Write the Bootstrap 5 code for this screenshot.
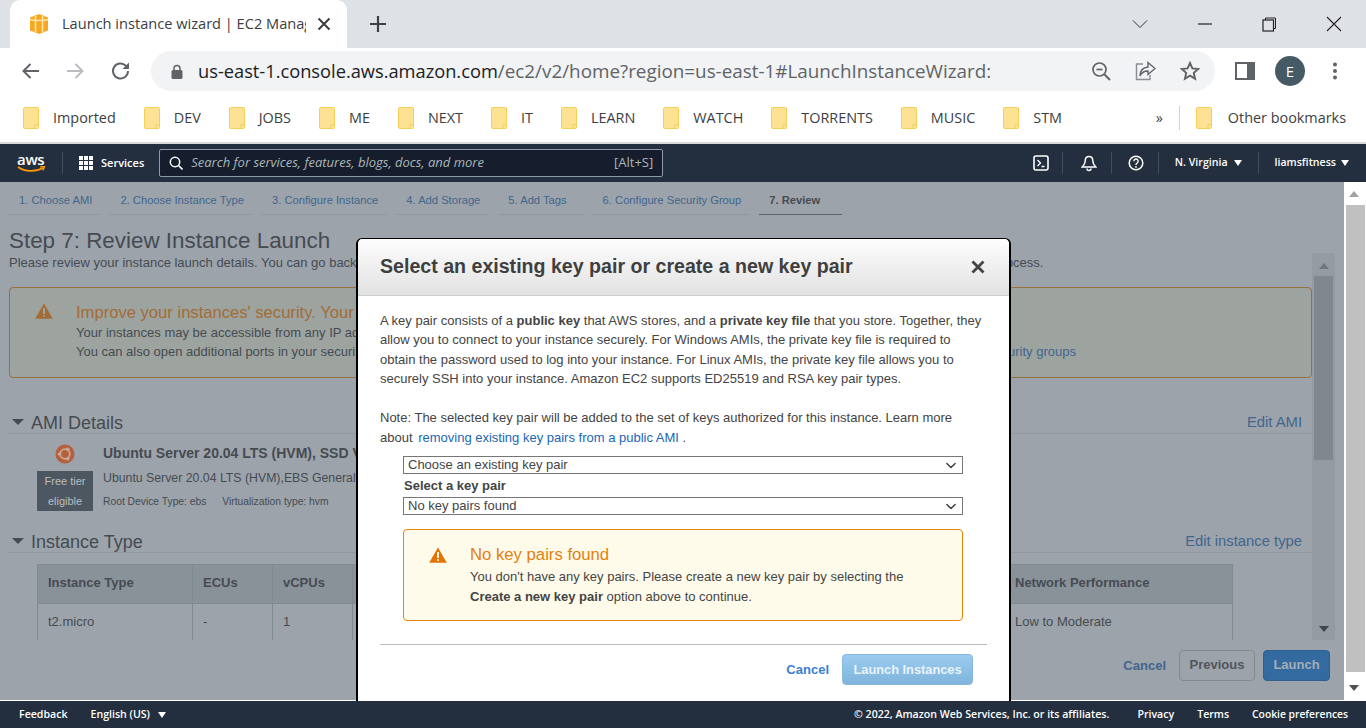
<!DOCTYPE html>
<html lang="en">
<head>
<meta charset="UTF-8">
<meta name="viewport" content="width=device-width, initial-scale=1.0">
<title>Launch instance wizard | EC2 Management Console</title>
<link rel="stylesheet" href="https://cdn.jsdelivr.net/npm/bootstrap@5.3.0/dist/css/bootstrap.min.css">
<style>
html, body { height: 728px; overflow: hidden; }
body { font-family: "Liberation Sans", Arial, sans-serif; background: #fff; color: #444; position: relative; }

/* browser chrome */
.tab-strip { height: 48px; background: #dee1e6; font-family: "Open Sans", sans-serif; }
.tab-active { width: 337px; margin-left: 10px; height: 48px; background: #fff; border-radius: 10px 10px 0 0; padding-left: 18px; flex-shrink: 0; }
.tab-title { width: 244px; margin-left: 12px; margin-right: 11px; font-size: 14.6px; color: #3c4043; white-space: nowrap; overflow: hidden; flex-shrink: 0; }
.win-btns { margin-left: auto; }
.win-btn { width: 64.5px; display: flex; justify-content: center; }
.tool-row { height: 46px; padding-left: 21px; }
.omni { width: 1064px; height: 40px; margin-left: 19px; margin-right: 15px; background: #f1f3f4; border-radius: 20px; padding-left: 20px; padding-right: 15px; font-family: "Open Sans", sans-serif; }
.omni-url { margin-left: 15px; font-size: 18.85px; color: #5f6368; white-space: nowrap; }
.omni-url b { font-weight: 400; font-size: 18.26px; color: #202124; }
.avatar-e { width: 30px; height: 30px; border-radius: 50%; background: #455a64; color: #fff; font-size: 15px; font-family: "Open Sans", sans-serif; }
.bm-row { height: 48px; padding-left: 23px; font-family: "Open Sans", sans-serif; font-size: 14.4px; color: #3c4043; white-space: nowrap; }
.bm-item { gap: 14px; margin-right: 28px; }
.bm-more { margin-left: auto; padding-right: 20px; }
.bm-sep { width: 1px; height: 24px; background: #d0d2d6; margin: 0 16px 0 16px; }

/* aws bars */
.aws-bar { background: #232f3e; color: #fff; font-family: "Open Sans", sans-serif; }
.aws-top { height: 38px; margin-top: 2px; padding-left: 17px; font-size: 11px; font-weight: 600; box-shadow: 0 -2px 0 #d9dadc; }
.top-sep { width: 1px; height: 22px; background: #414d5c; }
.search-box { width: 504px; height: 28px; background: #161e2d; border: 1px solid #8d99a8; border-radius: 2px; margin-left: 15px; padding: 0 9px 0 9px; color: #aab7b8; font-size: 13px; font-weight: 400; }
.search-box i { margin-left: 8px; }
.search-keys { margin-left: auto; font-size: 13px; }
.tri-w { display: inline-block; border-left: 4px solid transparent; border-right: 4px solid transparent; border-top: 6px solid #fff; }
.aws-foot { height: 27px; margin-top: 1px; padding-left: 19px; padding-right: 18px; font-size: 10.6px; font-weight: 600; white-space: nowrap; }

/* dimmed console page */
.page-wrap { height: 518px; background: #fff; }
.page-dim { width: 1344px; background: #9ca3aa; color: #464b52; }
.wiz-tabs { height: 33px; padding-left: 9px; gap: 10px; font-size: 11.2px; }
.wiz-tab { padding: 10px 8px 0 10px; color: #41668f; border-bottom: 1px solid #8f979f; white-space: nowrap; }
.wiz-tab-wide { padding-right: 16px; }
.wiz-tab-on { color: #464b52; font-weight: 700; border-bottom-color: #5c646c; padding-right: 22px; }
.step-h { height: 38px; padding: 14px 0 0 9px; font-size: 22.4px; line-height: 24px; color: #464b52; margin: 0; }
.scroll-pane { height: 387px; }
.pane-inner { width: 1303px; margin-left: 9px; overflow: hidden; font-size: 13px; white-space: nowrap; }
.step-sub { line-height: 20px; }
.step-sub-end { margin-left: 9px; }
.warn-dim { height: 91px; margin-top: 14px; border: 1px solid #96703f; border-radius: 4px; background: #9da39f; display: flex; padding: 15px 0 0 25px; gap: 23px; }
.warn-dim h5 { font-size: 16.6px; font-weight: 400; color: #a36c36; margin: 0 0 1px; line-height: 20px; }
.warn-dim p { margin: 0; line-height: 18.6px; }
.link-dim { color: #41668f; margin-left: 6px; }
.sec-head { border-bottom: 1px solid #8f979f; height: 21px; font-size: 18px; line-height: 20px; padding-left: 3px; }
.sec-head .edit-link { font-size: 14.8px; color: #41668f; margin: 0 10px 2px auto; }
.tri-d { display: inline-block; border-left: 6px solid transparent; border-right: 6px solid transparent; border-top: 6px solid #464b52; margin-right: 7px; position: relative; top: -1px; }
.ami-row { padding-left: 28px; height: 98px; }
.ami-side { width: 56px; margin-right: 10px; }
.ami-logo { margin-top: 10px; }
.free-tag { width: 56px; height: 40px; background: #4d5761; color: #b9bec3; font-size: 11px; line-height: 20px; text-align: center; margin-top: 7px; }
.ami-t { font-size: 14px; font-weight: 700; line-height: 16px; margin-top: 11px; }
.ami-d { font-size: 12.3px; line-height: 16px; margin-top: 9px; }
.ami-m { font-size: 10.3px; line-height: 14px; margin-top: 9px; }
.ami-m span { margin-right: 13px; }
.dim-table { width: 1195px; margin: 11px 0 0 28px; border-collapse: collapse; table-layout: fixed; }
.dim-table th { height: 39px; background: #8a9299; font-weight: 700; font-size: 13px; border: 1px solid #828a91; padding: 0 10px 2px; }
.dim-table td { height: 37px; font-size: 13px; border-left: 1px solid #828a91; border-right: 1px solid #828a91; border-bottom: 1px solid #8f979f; padding: 0 10px; }
.in-track { width: 23px; background: #949ba2; }
.in-thumb { width: 19px; height: 184px; background: #80878e; margin: 0 auto; }
.tri-u-s { width: 0; border-left: 5.5px solid transparent; border-right: 5.5px solid transparent; }
.action-row { height: 60px; padding: 10px 14px 0 0; gap: 8px; }
.btn-cancel-dim { color: #41668f; font-weight: 700; font-size: 13px; margin: 6px 5px 0 0; }
.btn-dim { height: 31px; border-radius: 4px; font-size: 13px; font-weight: 700; padding: 0 0 2px; display: flex; align-items: center; justify-content: center; }
.btn-prev { width: 76px; background: #9ca3aa; border: 1px solid #828a91; color: #50565d; }
.btn-launch { width: 67px; background: #336a9f; border: 1px solid #2e5f8e; color: #a3adb6; }
.outer-bar { width: 22px; background: #fff; }
.outer-thumb { width: 19px; height: 467px; background: #c0c0c0; margin-left: 2px; }

/* key pair modal */
.kp-modal { position: absolute; left: 356px; top: 238px; width: 655px; height: 463px; background: #fff; border: 1px solid #000; border-width: 1px 2px 0 2px; border-radius: 6px 6px 0 0; color: #444; font-size: 13px; }
.kp-head { height: 57px; background: linear-gradient(#fdfdfd, #e2e2e2); border-bottom: 1px solid #cfcfcf; border-radius: 5px 5px 0 0; padding: 0 24px 0 22px; }
.kp-head h5 { font-size: 19.6px; font-weight: 700; margin: 0; color: #3f3f3f; }
.kp-body { padding: 14.500px 22px 0; }
.kp-body p { line-height: 19.6px; margin: 0; white-space: nowrap; }
.kp-body p + p { margin-top: 19.6px; }
.kp-link { color: #1a66b8; text-decoration: none; margin-left: 2px; }
.kp-form { width: 560px; margin: 8.500px 0 0 23px; }
.kp-select { height: 18px; min-height: 0; padding: 0 0 0 4px; border: 1px solid #767676; border-radius: 0; font-size: 13px; line-height: 16px; color: #444; background-size: 14px 11px; background-position: right 4px center; }
.kp-label { font-weight: 700; line-height: 23px; display: block; padding-left: 1px; }
.kp-warn { height: 92px; margin-top: 14px; border: 1px solid #e8860b; border-radius: 4px; background: #fffbea; display: flex; padding: 15px 0 0 25px; gap: 23px; }
.kp-warn h5 { font-size: 16.7px; font-weight: 400; color: #e57f0e; margin: 0 0 2px; line-height: 20px; }
.kp-warn p { line-height: 19.4px; margin: 0; white-space: nowrap; }
.kp-rule { margin: 23px 0 0; border: 0; border-top: 1px solid #bbb; opacity: 1; }
.kp-foot { padding: 9px 14px 0 0; gap: 13px; }
.kp-cancel { color: #3b7fd4; font-weight: 700; font-size: 13px; }
.kp-launch { width: 131px; height: 31px; background: linear-gradient(#9accef, #80b4dc); border: 1px solid #86b7dc; border-radius: 4px; color: #e9f3fa; font-size: 12.8px; font-weight: 700; padding: 0; }
</style>
</head>
<body>

<!-- tab strip -->
<div class="tab-strip d-flex align-items-center">
  <div class="tab-active d-flex align-items-center">
    <svg width="22" height="24" viewBox="0 0 22 24" class="flex-shrink-0"><path d="M11 2l9 3.600v12.800L11 22 2 18.400V5.600z" fill="#f7a823"/><path d="M7.500 4v16.500M14.500 4v16.500" stroke="#fde3a7" stroke-width="1.600"/><path d="M2 7.500c3 1.400 15 1.400 18 0" stroke="#fde3a7" stroke-width="1.400" fill="none"/></svg>
    <div class="tab-title">Launch instance wizard | EC2 Manag</div>
    <svg width="14" height="14" viewBox="0 0 14 14" class="flex-shrink-0"><path d="M1.500 1.500l11 11M12.500 1.500l-11 11" stroke="#3c4043" stroke-width="2"/></svg>
  </div>
  <svg width="18" height="18" viewBox="0 0 18 18" style="margin-left:22px"><path d="M9 1v16M1 9h16" stroke="#3c4043" stroke-width="2.200"/></svg>
  <div class="win-btns d-flex align-items-center">
    <div class="win-btn"><svg width="16" height="10" viewBox="0 0 16 10"><path d="M1 1.500l7 7 7-7" stroke="#333" fill="none"/></svg></div>
    <div class="win-btn"><svg width="16" height="2" viewBox="0 0 16 2"><path d="M1 1h14" stroke="#222" stroke-width="1.200"/></svg></div>
    <div class="win-btn"><svg width="15" height="15" viewBox="0 0 15 15"><rect x="1" y="3" width="10.500" height="11" fill="none" stroke="#222" stroke-width="1.200"/><path d="M3.500 3V1h10v10.500h-2" fill="none" stroke="#222"/></svg></div>
    <div class="win-btn"><svg width="16" height="16" viewBox="0 0 16 16"><path d="M1 1l14 14M15 1L1 15" stroke="#222" stroke-width="1.100"/></svg></div>
  </div>
</div>

<!-- address row -->
<div class="tool-row d-flex align-items-center">
  <svg width="20" height="18" viewBox="0 0 20 18"><path d="M18 9H3M9.500 2L2.500 9l7 7" stroke="#5f6368" stroke-width="2" fill="none"/></svg>
  <svg width="20" height="18" viewBox="0 0 20 18" style="margin-left:24px"><path d="M2 9h15M10.500 2l7 7-7 7" stroke="#b9bcc1" stroke-width="2" fill="none"/></svg>
  <svg width="22" height="22" viewBox="0 0 22 22" style="margin-left:25px"><path d="M18 11a7.500 7.500 0 1 1-2.200-5.300L18 8" stroke="#5f6368" stroke-width="2" fill="none"/><path d="M19 2.500V9h-6.500z" fill="#5f6368"/></svg>
  <div class="omni d-flex align-items-center">
    <svg width="12" height="15" viewBox="0 0 12 15" class="flex-shrink-0"><rect x="0.500" y="6" width="11" height="9" rx="1.500" fill="#5f6368"/><path d="M3 6.500V4.500a3 3 0 0 1 6 0v2" stroke="#5f6368" stroke-width="1.500" fill="none"/></svg>
    <span class="omni-url"><b>us-east-1.console.aws.amazon.com</b>/ec2/v2/home?region=us-east-1#LaunchInstanceWizard:</span>
    <div class="d-flex align-items-center ms-auto" style="gap:24px">
      <svg width="20" height="20" viewBox="0 0 20 20"><circle cx="8.500" cy="8.500" r="6.500" stroke="#5f6368" stroke-width="1.700" fill="none"/><path d="M13.500 13.500L19 19" stroke="#5f6368" stroke-width="2"/><path d="M5.500 8.500h6" stroke="#5f6368" stroke-width="1.700"/></svg>
      <svg width="21" height="20" viewBox="0 0 21 20"><path d="M8 3H1.500v15.500H15V14" stroke="#8a8d92" stroke-width="1.400" fill="none"/><path d="M13 1.500L20 7.500l-7 6V10c-4 0-6.500 1.500-8 5 0-5 3-8.500 8-9z" stroke="#5f6368" stroke-width="1.400" fill="none"/></svg>
      <svg width="20" height="20" viewBox="0 0 20 20"><path d="M10 2l2.400 5.400 5.800.6-4.400 3.900 1.300 5.800L10 14.700l-5.100 3 1.300-5.800L1.800 8l5.800-.6z" stroke="#5f6368" stroke-width="1.900" fill="none"/></svg>
    </div>
  </div>
  <svg width="20" height="18" viewBox="0 0 20 18" style="margin-left:5px"><rect x="1" y="1" width="18" height="16" fill="none" stroke="#5f6368" stroke-width="2"/><rect x="12" y="1" width="7" height="16" fill="#5f6368"/></svg>
  <div class="avatar-e d-flex align-items-center justify-content-center" style="margin-left:20px">E</div>
  <svg width="4" height="18" viewBox="0 0 4 18" style="margin-left:28px"><circle cx="2" cy="2.500" r="2" fill="#5f6368"/><circle cx="2" cy="9" r="2" fill="#5f6368"/><circle cx="2" cy="15.500" r="2" fill="#5f6368"/></svg>
</div>

<!-- bookmarks -->
<svg width="0" height="0" class="position-absolute"><defs><symbol id="bmk" viewBox="0 0 16 22"><rect x="0.500" y="0.500" width="15" height="21" rx="1" fill="#fde293" stroke="#f5cf58"/><path d="M12 21.500v-4h3.500" stroke="#f5cf58" fill="none"/></symbol></defs></svg>
<div class="bm-row d-flex align-items-center">
  <div class="bm-item d-flex align-items-center"><svg width="16" height="22"><use href="#bmk"/></svg><span>Imported</span></div>
  <div class="bm-item d-flex align-items-center"><svg width="16" height="22"><use href="#bmk"/></svg><span>DEV</span></div>
  <div class="bm-item d-flex align-items-center"><svg width="16" height="22"><use href="#bmk"/></svg><span>JOBS</span></div>
  <div class="bm-item d-flex align-items-center"><svg width="16" height="22"><use href="#bmk"/></svg><span>ME</span></div>
  <div class="bm-item d-flex align-items-center"><svg width="16" height="22"><use href="#bmk"/></svg><span>NEXT</span></div>
  <div class="bm-item d-flex align-items-center"><svg width="16" height="22"><use href="#bmk"/></svg><span>IT</span></div>
  <div class="bm-item d-flex align-items-center"><svg width="16" height="22"><use href="#bmk"/></svg><span>LEARN</span></div>
  <div class="bm-item d-flex align-items-center"><svg width="16" height="22"><use href="#bmk"/></svg><span>WATCH</span></div>
  <div class="bm-item d-flex align-items-center"><svg width="16" height="22"><use href="#bmk"/></svg><span>TORRENTS</span></div>
  <div class="bm-item d-flex align-items-center"><svg width="16" height="22"><use href="#bmk"/></svg><span>MUSIC</span></div>
  <div class="bm-item d-flex align-items-center"><svg width="16" height="22"><use href="#bmk"/></svg><span>STM</span></div>
  <div class="bm-more d-flex align-items-center"><span>»</span><div class="bm-sep"></div><svg width="16" height="22" class="me-3"><use href="#bmk"/></svg><span>Other bookmarks</span></div>
</div>

<!-- aws top nav -->
<div class="aws-bar aws-top d-flex align-items-center">
  <div class="d-flex flex-column" style="width:29px;margin-right:16px">
    <span style="font-size:15px;line-height:13px;font-weight:600;letter-spacing:-.3px">aws</span>
    <svg width="29" height="7" viewBox="0 0 29 7"><path d="M1 1c7 5 18 5 25 1" stroke="#f90" stroke-width="1.600" fill="none"/><path d="M23 .8l4.500-.3-1.500 4" stroke="#f90" stroke-width="1.300" fill="none"/></svg>
  </div>
  <div class="top-sep"></div>
  <svg width="14" height="14" viewBox="0 0 14 14" fill="#fff" style="margin:0 8px 0 16px"><rect width="4" height="4"/><rect x="5" width="4" height="4"/><rect x="10" width="4" height="4"/><rect y="5" width="4" height="4"/><rect x="5" y="5" width="4" height="4"/><rect x="10" y="5" width="4" height="4"/><rect y="10" width="4" height="4"/><rect x="5" y="10" width="4" height="4"/><rect x="10" y="10" width="4" height="4"/></svg>
  <span>Services</span>
  <div class="search-box d-flex align-items-center">
    <svg width="14" height="14" viewBox="0 0 14 14"><circle cx="6" cy="6" r="4.700" stroke="#fff" stroke-width="1.500" fill="none"/><path d="M9.500 9.500L13.500 13.500" stroke="#fff" stroke-width="1.600"/></svg>
    <i>Search for services, features, blogs, docs, and more</i>
    <span class="search-keys">[Alt+S]</span>
  </div>
  <div class="d-flex align-items-center ms-auto" style="margin-right:17px">
    <svg width="16" height="16" viewBox="0 0 16 16"><rect x="1" y="1" width="14" height="14" rx="2" stroke="#fff" stroke-width="1.600" fill="none"/><path d="M4.500 5l3 3-3 3M8.500 11.500h3" stroke="#fff" stroke-width="1.300" fill="none"/></svg>
    <div class="top-sep" style="margin:0 18px 0 13px"></div>
    <svg width="16" height="17" viewBox="0 0 16 17"><path d="M8 1.500c-2.800 0-3.800 2-3.800 4.500 0 2.500-1 4-3 6h13.600c-2-2-3-3.500-3-6 0-2.500-1-4.500-3.800-4.500z" stroke="#fff" stroke-width="1.500" fill="none"/><path d="M6 13.500a2 2 0 0 0 4 0" stroke="#fff" stroke-width="1.500" fill="none"/></svg>
    <div class="top-sep" style="margin:0 16px 0 14px"></div>
    <svg width="16" height="16" viewBox="0 0 16 16"><circle cx="8" cy="8" r="6.800" stroke="#fff" stroke-width="1.500" fill="none"/><path d="M5.800 6.200a2.200 2.200 0 1 1 3.300 1.900C8.300 8.600 8 9 8 10" stroke="#fff" stroke-width="1.400" fill="none"/><circle cx="8" cy="11.900" r=".9" fill="#fff"/></svg>
    <div class="top-sep" style="margin:0 16px 0 14px"></div>
    <span style="font-size:10.6px">N. Virginia</span><span class="tri-w" style="margin-left:6px"></span>
    <div class="top-sep" style="margin:0 16px"></div>
    <span style="font-size:10.6px">liamsfitness</span><span class="tri-w" style="margin-left:5px"></span>
  </div>
</div>

<!-- page -->
<div class="page-wrap d-flex">
  <div class="page-dim d-flex flex-column">
    <div class="wiz-tabs d-flex">
      <div class="wiz-tab">1. Choose AMI</div>
      <div class="wiz-tab">2. Choose Instance Type</div>
      <div class="wiz-tab">3. Configure Instance</div>
      <div class="wiz-tab">4. Add Storage</div>
      <div class="wiz-tab wiz-tab-wide">5. Add Tags</div>
      <div class="wiz-tab">6. Configure Security Group</div>
      <div class="wiz-tab wiz-tab-on">7. Review</div>
    </div>
    <h4 class="step-h">Step 7: Review Instance Launch</h4>
    <div class="scroll-pane d-flex">
      <div class="pane-inner">
        <div class="step-sub">Please review your instance launch details. You can go back to edit changes for each section. Click Launch to assign a key pair to your instance and complete the launch <span class="step-sub-end">process.</span></div>
        <div class="warn-dim">
          <svg width="18" height="16" viewBox="0 0 18 16" class="flex-shrink-0"><path d="M9 .5L17.800 15.800H.2z" fill="#a36c36"/><path d="M9 5v6" stroke="#9da39f" stroke-width="2"/><circle cx="9" cy="13" r="1.100" fill="#9da39f"/></svg>
          <div>
            <h5>Improve your instances' security. Your security group, launch-wizard-1, is open to the world.</h5>
            <p>Your instances may be accessible from any IP address. We recommend that you update your security group rules to allow access from known IP addresses only.</p>
            <p>You can also open additional ports in your security group to facilitate access to the application or service you're running, e.g., HTTP (80) for web servers. <span class="link-dim">Edit security groups</span></p>
          </div>
        </div>
        <div class="sec-head d-flex align-items-center" style="margin-top:35px"><span class="tri-d"></span><span>AMI Details</span><span class="edit-link">Edit AMI</span></div>
        <div class="ami-row d-flex">
          <div class="ami-side d-flex flex-column align-items-center">
            <svg width="20" height="20" viewBox="0 0 20 20" class="ami-logo"><circle cx="10" cy="10" r="9.500" fill="#b5603c"/><circle cx="10" cy="10" r="4.800" stroke="#c8a796" stroke-width="1.800" fill="none"/><circle cx="4.500" cy="10" r="1.800" fill="#c8a796"/><circle cx="12.800" cy="5.200" r="1.800" fill="#c8a796"/><circle cx="12.800" cy="14.800" r="1.800" fill="#c8a796"/></svg>
            <div class="free-tag">Free tier<br>eligible</div>
          </div>
          <div>
            <div class="ami-t">Ubuntu Server 20.04 LTS (HVM), SSD Volume Type</div>
            <div class="ami-d">Ubuntu Server 20.04 LTS (HVM),EBS General Purpose (SSD) Volume Type.</div>
            <div class="ami-m"><span>Root Device Type: ebs</span> <span>Virtualization type: hvm</span></div>
          </div>
        </div>
        <div class="sec-head d-flex align-items-center"><span class="tri-d"></span><span>Instance Type</span><span class="edit-link">Edit instance type</span></div>
        <table class="dim-table">
          <colgroup><col style="width:155px"><col style="width:80px"><col style="width:80px"><col style="width:652px"><col style="width:228px"></colgroup>
          <tr><th>Instance Type</th><th>ECUs</th><th>vCPUs</th><th></th><th>Network Performance</th></tr>
          <tr><td>t2.micro</td><td>-</td><td>1</td><td></td><td>Low to Moderate</td></tr>
        </table>
      </div>
      <div class="in-track d-flex flex-column align-items-center">
        <div class="tri-u-s" style="border-bottom:6px solid #6f767d;margin:10px 0 7px"></div>
        <div class="in-thumb"></div>
        <div class="tri-u-s mt-auto" style="border-top:6px solid #3f454b;margin-bottom:8px"></div>
      </div>
    </div>
    <div class="action-row d-flex align-items-start justify-content-end">
      <span class="btn-cancel-dim">Cancel</span>
      <button class="btn btn-dim btn-prev" type="button">Previous</button>
      <button class="btn btn-dim btn-launch" type="button">Launch</button>
    </div>
  </div>
  <div class="outer-bar d-flex flex-column">
    <div class="tri-u-s" style="border-bottom:6px solid #a3a3a3;margin:9px 0 8px 5px"></div>
    <div class="outer-thumb"></div>
    <div class="tri-u-s mt-auto" style="border-top:6px solid #505050;margin:0 0 9px 5px"></div>
  </div>
</div>

<!-- aws footer -->
<div class="aws-bar aws-foot d-flex align-items-center">
  <span>Feedback</span>
  <span style="margin-left:23px">English (US)</span><span class="tri-w ms-2"></span>
  <span class="ms-auto">© 2022, Amazon Web Services, Inc. or its affiliates.</span>
  <span style="margin-left:28px">Privacy</span>
  <span style="margin-left:23px">Terms</span>
  <span style="margin-left:23px;font-size:10.3px">Cookie preferences</span>
</div>

<!-- modal over the dimmed page -->
<div class="kp-modal">
  <div class="kp-head d-flex align-items-center justify-content-between">
    <h5>Select an existing key pair or create a new key pair</h5>
    <svg width="14" height="14" viewBox="0 0 14 14"><path d="M1.500 1.500l11 11M12.500 1.500l-11 11" stroke="#444" stroke-width="2.800"/></svg>
  </div>
  <div class="kp-body">
    <p>A key pair consists of a <b>public key</b> that AWS stores, and a <b>private key file</b> that you store. Together, they<br>allow you to connect to your instance securely. For Windows AMIs, the private key file is required to<br>obtain the password used to log into your instance. For Linux AMIs, the private key file allows you to<br>securely SSH into your instance. Amazon EC2 supports ED25519 and RSA key pair types.</p>
    <p>Note: The selected key pair will be added to the set of keys authorized for this instance. Learn more<br>about <a class="kp-link" href="#">removing existing key pairs from a public AMI</a> .</p>
    <div class="kp-form">
      <select class="form-select kp-select"><option>Choose an existing key pair</option></select>
      <label class="kp-label">Select a key pair</label>
      <select class="form-select kp-select"><option>No key pairs found</option></select>
      <div class="kp-warn">
        <svg width="18" height="16" viewBox="0 0 18 16" class="flex-shrink-0" style="margin-top:2px"><path d="M9 .5L17.800 15.800H.2z" fill="#e57300"/><path d="M9 5v6" stroke="#fffbea" stroke-width="2"/><circle cx="9" cy="13" r="1.100" fill="#fffbea"/></svg>
        <div>
          <h5>No key pairs found</h5>
          <p>You don't have any key pairs. Please create a new key pair by selecting the<br><b>Create a new key pair</b> option above to continue.</p>
        </div>
      </div>
    </div>
    <hr class="kp-rule">
    <div class="kp-foot d-flex align-items-center justify-content-end">
      <span class="kp-cancel">Cancel</span>
      <button class="btn kp-launch" type="button">Launch Instances</button>
    </div>
  </div>
</div>

<script src="https://cdn.jsdelivr.net/npm/bootstrap@5.3.0/dist/js/bootstrap.bundle.min.js"></script>
</body>
</html>
